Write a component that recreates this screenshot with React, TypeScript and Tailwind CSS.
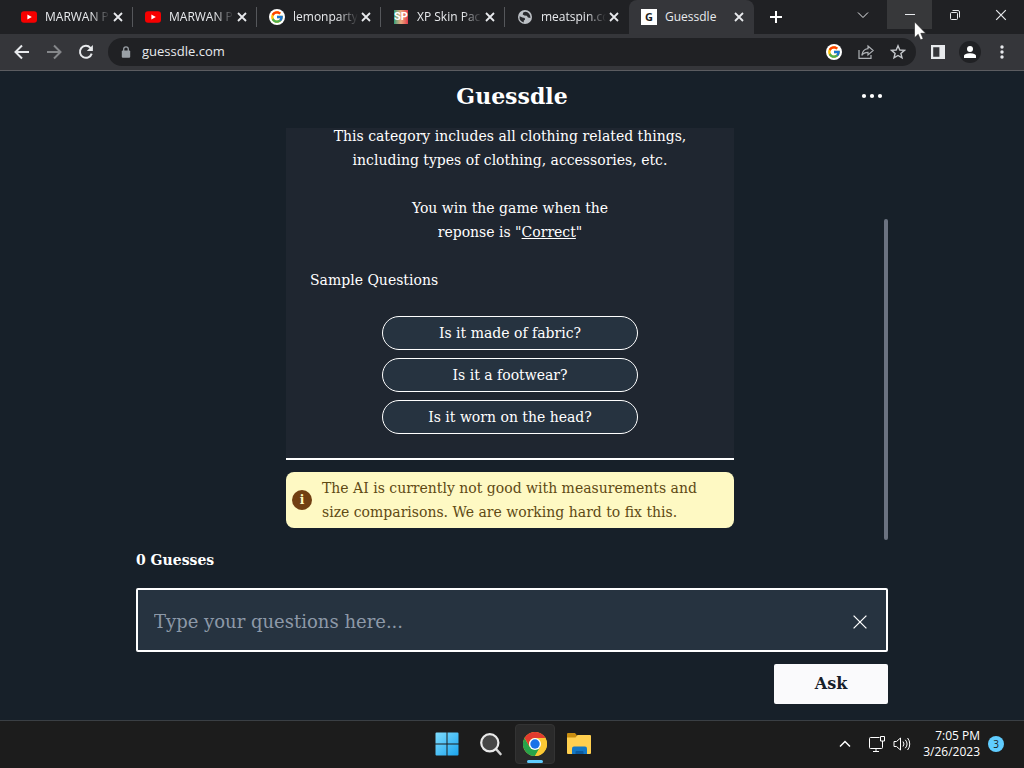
import type { ReactNode } from "react";
import { FcGoogle } from "react-icons/fc";

type TabInfo = { title: string; icon: ReactNode; active?: boolean; divider?: boolean };

function YouTubeIcon() {
  return (
    <svg className="size-4 shrink-0" viewBox="0 0 16 16" aria-hidden="true">
      <rect x="0" y="2.2" width="16" height="11.6" rx="3" fill="#f60000" />
      <path d="M6.4 5.5 10.8 8 6.4 10.5z" fill="#fff" />
    </svg>
  );
}

function GoogleBadge() {
  return (
    <span className="flex size-4 shrink-0 items-center justify-center rounded-full bg-white">
      <FcGoogle className="size-[14px]" aria-hidden="true" />
    </span>
  );
}

function GlobeIcon() {
  return (
    <svg className="size-4 shrink-0" viewBox="0 0 16 16" aria-hidden="true">
      <circle cx="8" cy="8" r="7" fill="#bdc1c6" />
      <path
        d="M8.3 2.7 6.2 3.6 5.7 5.4 7.4 6.5 9.8 6.7 11 8.4 13.4 8.9A5.6 5.6 0 0 0 8.3 2.7zM2.6 7.2 5.4 8.4 7.7 8.9 8.1 10.6 6.7 11.7 6.8 13.4A5.6 5.6 0 0 1 2.6 7.2z"
        fill="#292a2d"
      />
    </svg>
  );
}

function SkinPackIcon() {
  return (
    <span className="flex size-4 shrink-0 items-center justify-center">
      <span className="flex h-[14px] w-[14px] items-center justify-center bg-linear-to-r from-[#16a07a] via-[#e9a77d] to-[#e0354d] font-['Roboto',sans-serif] text-[11px] leading-[14px] font-bold text-white">
        SP
      </span>
    </span>
  );
}

function GuessdleIcon() {
  return (
    <span className="flex size-4 shrink-0 items-center justify-center bg-white text-[11px] leading-4 font-bold text-[#1c1c1c]">
      G
    </span>
  );
}

function CloseIcon({ className }: { className: string }) {
  return (
    <svg className={className} viewBox="0 0 10 10" fill="none" stroke="currentColor" aria-hidden="true">
      <path d="M1 1 9 9M9 1 1 9" />
    </svg>
  );
}

const tabs: TabInfo[] = [
  { title: "MARWAN P", icon: <YouTubeIcon />, divider: true },
  { title: "MARWAN P", icon: <YouTubeIcon />, divider: true },
  { title: "lemonparty", icon: <GoogleBadge />, divider: true },
  { title: "XP Skin Pac", icon: <SkinPackIcon />, divider: true },
  { title: "meatspin.co", icon: <GlobeIcon /> },
  { title: "Guessdle", icon: <GuessdleIcon />, active: true },
];

function Tab({ title, icon, active, divider }: TabInfo) {
  return (
    <div
      className={
        active
          ? "flex h-[34px] w-[125px] items-center rounded-t-lg bg-[#35363a] pl-3"
          : "flex h-[34px] w-[124px] items-center pl-3"
      }
    >
      {icon}
      <span
        className={
          active
            ? "ml-2 flex-1 text-xs whitespace-nowrap"
            : "ml-2 min-w-0 flex-1 overflow-hidden mask-r-from-70% mask-r-to-100% text-xs whitespace-nowrap"
        }
      >
        {title}
      </span>
      <button type="button" aria-label="Close tab" className="flex size-4 items-center justify-center">
        <CloseIcon className="size-[10px] stroke-[1.8]" />
      </button>
      <span className={divider ? "ml-[6px] h-5 w-px bg-[#55575b]" : "ml-[6px] h-5 w-px"} />
    </div>
  );
}

function TabStrip() {
  return (
    <div className="flex h-[34px] shrink-0 bg-[#202124] pl-[9px] text-[#e8eaed]">
      {tabs.map((tab, i) => (
        <Tab key={i} {...tab} />
      ))}
      <button type="button" aria-label="New tab" className="flex w-11 items-center justify-center">
        <svg className="size-3" viewBox="0 0 12 12" stroke="#fff" strokeWidth="2" aria-hidden="true">
          <path d="M6 0v12M0 6h12" />
        </svg>
      </button>
      <div className="ml-auto flex h-[29px] items-stretch">
        <button type="button" aria-label="Search tabs" className="flex w-12 items-center justify-center">
          <svg className="size-3" viewBox="0 0 12 12" fill="none" stroke="currentColor" aria-hidden="true">
            <path d="M1 3.5 6 8.5 11 3.5" />
          </svg>
        </button>
        <button type="button" aria-label="Minimize" className="flex w-[45px] items-center justify-center bg-[#37383a]">
          <svg className="size-[10px]" viewBox="0 0 10 10" stroke="currentColor" aria-hidden="true">
            <path d="M0 4.5h10" />
          </svg>
        </button>
        <button type="button" aria-label="Restore" className="flex w-[46px] items-center justify-center">
          <svg className="size-[10px]" viewBox="0 0 10 10" fill="none" stroke="currentColor" aria-hidden="true">
            <rect x="0.5" y="2.5" width="7" height="7" rx="1" />
            <path d="M2.5 .5H8a1.5 1.5 0 0 1 1.5 1.5v5.5" />
          </svg>
        </button>
        <button type="button" aria-label="Close window" className="flex w-[46px] items-center justify-center">
          <CloseIcon className="size-3" />
        </button>
      </div>
    </div>
  );
}

function Toolbar() {
  return (
    <div className="flex h-[37px] shrink-0 items-center border-b border-[#5b5c60] bg-[#35363a] pr-[14px] pl-[14px] text-[#e8eaed]">
      <button type="button" aria-label="Back">
        <svg className="size-4" viewBox="0 0 16 16" fill="none" stroke="currentColor" strokeWidth="2" aria-hidden="true">
          <path d="M15 8H2M8 1.5 1.5 8 8 14.5" />
        </svg>
      </button>
      <button type="button" aria-label="Forward" className="ml-4 text-[#85878a]">
        <svg className="size-4" viewBox="0 0 16 16" fill="none" stroke="currentColor" strokeWidth="2" aria-hidden="true">
          <path d="M1 8h13M8 1.5 14.5 8 8 14.5" />
        </svg>
      </button>
      <button type="button" aria-label="Reload" className="ml-4">
        <svg className="size-4" viewBox="0 0 16 16" fill="none" stroke="currentColor" strokeWidth="2" aria-hidden="true">
          <path d="M13.7 9.6A6 6 0 1 1 12.4 3.8L14 5.4" />
          <path d="M14.9 1v6.1H8.8z" fill="currentColor" stroke="none" />
        </svg>
      </button>
      <div className="ml-[14px] flex h-7 flex-1 items-center rounded-full bg-[#202124] pr-[10px] pl-[13px]">
        <svg className="h-3 w-[10px]" viewBox="0 0 10 12" fill="none" aria-hidden="true">
          <rect x="0.8" y="4.4" width="8.4" height="7.4" rx="1" fill="#9aa0a6" />
          <path d="M2.7 5V3.1a2.3 2.3 0 0 1 4.6 0V5" stroke="#9aa0a6" strokeWidth="1.3" />
        </svg>
        <input
          type="text"
          aria-label="Address"
          defaultValue="guessdle.com"
          className="ml-[11px] min-w-0 flex-1 bg-transparent text-[13px] text-[#e8eaed] outline-none"
        />
        <GoogleBadge />
        <button type="button" aria-label="Share" className="ml-4 text-[#aeb1b5]">
          <svg className="size-4" viewBox="0 0 16 16" fill="none" stroke="currentColor" strokeWidth="1.2" aria-hidden="true">
            <path d="M1 6v8.4h12V11" />
            <path d="M10 2 15.2 6.5 10 11V8.4C7 8.4 5.2 9.3 3.8 11.4 4.3 7.5 6.4 5 10 4.6z" />
          </svg>
        </button>
        <button type="button" aria-label="Bookmark this page" className="ml-4 text-[#c4c7cb]">
          <svg className="size-4" viewBox="0 0 16 16" fill="none" stroke="currentColor" strokeWidth="1.4" aria-hidden="true">
            <path d="M8 1.8 9.8 6 14.4 6.4 10.9 9.4 12 13.9 8 11.5 4 13.9 5.1 9.4 1.6 6.4 6.2 6z" />
          </svg>
        </button>
      </div>
      <button type="button" aria-label="Side panel" className="ml-[14px]">
        <svg className="size-4" viewBox="0 0 16 16" aria-hidden="true">
          <path d="M1 1h14v14H1zM3.2 3.2v9.6h6.2V3.2z" fill="currentColor" fillRule="evenodd" />
        </svg>
      </button>
      <button
        type="button"
        aria-label="Profile"
        className="ml-[13px] flex size-[22px] items-center justify-center rounded-full bg-[#202124]"
      >
        <svg className="size-3" viewBox="0 0 12 12" fill="#fff" aria-hidden="true">
          <circle cx="6" cy="3" r="3" />
          <path d="M0 12v-2C0 8 3.5 7.2 6 7.2S12 8 12 10v2z" />
        </svg>
      </button>
      <button type="button" aria-label="Menu" className="ml-[13px] flex w-4 justify-center">
        <svg className="h-4 w-1" viewBox="0 0 4 16" fill="currentColor" aria-hidden="true">
          <circle cx="2" cy="3" r="1.7" />
          <circle cx="2" cy="8" r="1.7" />
          <circle cx="2" cy="13" r="1.7" />
        </svg>
      </button>
    </div>
  );
}

const samples = ["Is it made of fabric?", "Is it a footwear?", "Is it worn on the head?"];

function Game() {
  return (
    <main className="flex min-h-0 flex-1 flex-col bg-[#172029] font-['Rockwell','DejaVu_Serif',serif] text-sm leading-6 text-white">
      <div className="mx-auto flex min-h-0 w-full max-w-[752px] flex-1 flex-col">
        <header className="grid h-[57px] shrink-0 grid-cols-[1fr_auto_1fr] items-center pb-2">
          <h1 className="col-start-2 text-[22px] leading-8 font-bold">Guessdle</h1>
          <button type="button" aria-label="More options" className="mr-[5px] justify-self-end">
            <svg className="h-[6px] w-[22px]" viewBox="0 0 22 6" fill="#fff" aria-hidden="true">
              <circle cx="3" cy="3" r="2.1" />
              <circle cx="11" cy="3" r="2.1" />
              <circle cx="19" cy="3" r="2.1" />
            </svg>
          </button>
        </header>

        <div className="flex min-h-0 flex-1">
          <div className="flex min-w-0 flex-1 flex-col items-center justify-end overflow-hidden pb-3">
            <section className="w-full max-w-md shrink-0 border-b-2 border-white bg-[#1f2630] px-6 pb-6">
              <p className="text-center">
                This category includes all clothing related things,
                <br />
                including types of clothing, accessories, etc.
              </p>
              <p className="mt-6 text-center">
                You win the game when the
                <br />
                reponse is "<span className="underline">Correct</span>"
              </p>
              <h2 className="mt-6">Sample Questions</h2>
              <div className="mt-6 flex flex-col items-center gap-2">
                {samples.map((text) => (
                  <button
                    key={text}
                    type="button"
                    className="h-[34px] w-64 rounded-full border border-white bg-[#263340]"
                  >
                    {text}
                  </button>
                ))}
              </div>
            </section>
            <div className="mt-3 flex w-full max-w-md shrink-0 items-center gap-[10px] rounded-lg bg-[#fef9c3] px-[6px] py-1 text-[#5f4a14]">
              <span className="flex size-5 shrink-0 items-center justify-center rounded-full bg-[#713f12] text-xs font-bold text-[#fef9c3]">
                i
              </span>
              <p>
                The AI is currently not good with measurements and
                <br />
                size comparisons. We are working hard to fix this.
              </p>
            </div>
          </div>
          <div className="flex w-1 flex-col justify-end">
            <div className="h-[78%] rounded-full bg-[#6b7280]" />
          </div>
        </div>

        <form className="flex shrink-0 flex-col pt-2 pb-4" onSubmit={(e) => e.preventDefault()}>
          <label htmlFor="question" className="text-sm leading-6 font-bold">
            0 Guesses
          </label>
          <div className="mt-4 flex h-16 items-center rounded-xs border-2 border-white bg-[#263340] pt-[3px] pr-[18px] pl-4">
            <input
              id="question"
              type="text"
              placeholder="Type your questions here..."
              className="min-w-0 flex-1 bg-transparent text-lg outline-none placeholder:text-[#8d99a8]"
            />
            <button type="button" aria-label="Clear" className="flex size-4 items-center justify-center">
              <CloseIcon className="size-4 stroke-[0.8]" />
            </button>
          </div>
          <button
            type="submit"
            className="mt-3 h-10 w-[114px] self-end rounded-xs bg-[#fafafc] text-base font-bold text-[#172029]"
          >
            Ask
          </button>
        </form>
      </div>
    </main>
  );
}

function ChromeIcon() {
  return (
    <svg className="size-6 shrink-0" viewBox="0 0 24 24" aria-hidden="true">
      <circle cx="12" cy="12" r="12" fill="#fcc934" />
      <path d="M1.6 6A12 12 0 0 0 12 24L17.2 15 12 12 6.8 15z" fill="#27a34a" />
      <path d="M12 6h10.4A12 12 0 0 1 12 24l5.2-9z" fill="#fcc934" />
      <path d="M1.6 6A12 12 0 0 1 22.4 6H12a6 6 0 0 0-5.2 9z" fill="#e33b2e" />
      <circle cx="12" cy="12" r="6" fill="#fff" />
      <circle cx="12" cy="12" r="4.7" fill="#1a73e8" />
    </svg>
  );
}

function Taskbar() {
  return (
    <footer className="grid h-12 shrink-0 grid-cols-[1fr_auto_1fr] items-center border-t border-[#3a3f44] bg-[#1c1c1c] pb-px pl-[2px] text-white">
      <nav aria-label="Taskbar" className="col-start-2 flex">
        <button type="button" aria-label="Start" className="flex h-10 w-11 items-center justify-center">
          <svg className="size-6" viewBox="0 0 24 24" aria-hidden="true">
            <defs>
              <linearGradient id="win" x1="0" y1="0" x2="1" y2="1">
                <stop offset="0" stopColor="#7fdcfd" />
                <stop offset="1" stopColor="#1ba4ee" />
              </linearGradient>
            </defs>
            <path
              d="M1.5.5h10v11H.5v-10a1 1 0 0 1 1-1zM12.5.5h10a1 1 0 0 1 1 1v10h-11zM.5 12.5h11v11h-10a1 1 0 0 1-1-1zM12.5 12.5h11v10a1 1 0 0 1-1 1h-10z"
              fill="url(#win)"
            />
          </svg>
        </button>
        <button type="button" aria-label="Search" className="flex h-10 w-11 items-center justify-center">
          <svg className="size-6" viewBox="0 0 24 24" fill="none" strokeLinecap="round" aria-hidden="true">
            <path d="M17 17 21.5 22" stroke="#d4d4d4" strokeWidth="2.6" />
            <circle cx="10.8" cy="10.8" r="8.6" fill="#464646" stroke="#e9e9e9" strokeWidth="2.2" />
          </svg>
        </button>
        <button type="button" aria-label="Chrome" className="flex h-10 w-11 justify-center">
          <span className="flex h-10 w-10 flex-col items-center rounded-sm border border-[#333] bg-[#2a2a2a] pt-[7px]">
            <ChromeIcon />
            <span className="mt-1 h-[3px] w-4 shrink-0 rounded-full bg-[#60cdff]" />
          </span>
        </button>
        <button type="button" aria-label="File Explorer" className="flex h-10 w-11 items-center justify-center">
          <svg className="size-6" viewBox="0 0 24 24" aria-hidden="true">
            <path d="M0 2a1 1 0 0 1 1-1h7l2 2.500v5H0z" fill="#c98d10" />
            <path d="M0 5.500h8.500l2-2.500H23a1 1 0 0 1 1 1v17a1 1 0 0 1-1 1H1a1 1 0 0 1-1-1z" fill="#ffcf4f" />
            <path d="M5 22v-5.500a2 2 0 0 1 2-2h11a2 2 0 0 1 2 2V22z" fill="#1377c5" />
            <path d="M8.500 22v-2a1 1 0 0 1 1-1h6a1 1 0 0 1 1 1v2z" fill="#0d5a9e" />
          </svg>
        </button>
      </nav>
      <div className="flex items-center justify-self-end pr-5">
        <button type="button" aria-label="Show hidden icons">
          <svg className="size-3" viewBox="0 0 12 12" fill="none" stroke="#fff" strokeWidth="1.5" aria-hidden="true">
            <path d="M1 8.5 6 3.5 11 8.5" />
          </svg>
        </button>
        <svg className="ml-[18px] h-4 w-4" viewBox="0 0 16 16" fill="none" stroke="#fff" aria-hidden="true">
          <path d="M10.500 1.500H1.500a1 1 0 0 0-1 1v9a1 1 0 0 0 1 1h11a1 1 0 0 0 1-1V7M4 15.500h6M7 12.500v3" />
          <path d="M11.500.5h4v4.500h-4zM13.500 5v2" />
        </svg>
        <svg className="ml-2 h-4 w-[18px]" viewBox="0 0 18 16" fill="none" stroke="#fff" aria-hidden="true">
          <path d="M1 5.500h2.500L7.500 2v12L3.500 10.500H1z" strokeLinejoin="round" />
          <path d="M10 5.500a4 4 0 0 1 0 5M12.300 3.800a6.500 6.500 0 0 1 0 8.400M14.600 2a9.500 9.500 0 0 1 0 12" />
        </svg>
        <div className="ml-3 text-right text-xs leading-4">
          <div>7:05 PM</div>
          <div>3/26/2023</div>
        </div>
        <span className="ml-2 flex size-4 items-center justify-center rounded-full bg-[#60cdff] text-[10px] leading-4 text-[#1c1c1c]">
          3
        </span>
      </div>
    </footer>
  );
}

export default function App() {
  return (
    <div className="relative flex h-screen flex-col overflow-hidden bg-[#172029] font-['Segoe_UI','Open_Sans',sans-serif]">
      <TabStrip />
      <Toolbar />
      <Game />
      <Taskbar />
      <svg className="pointer-events-none absolute top-[21px] left-[914px] h-5 w-3" viewBox="0 0 12 20" aria-hidden="true">
        <path d="M.5.8v16l3.700-3.500 2.400 5.600 2.600-1.100-2.400-5.500h4.900z" fill="#fff" stroke="#222" strokeWidth="0.6" />
      </svg>
    </div>
  );
}
